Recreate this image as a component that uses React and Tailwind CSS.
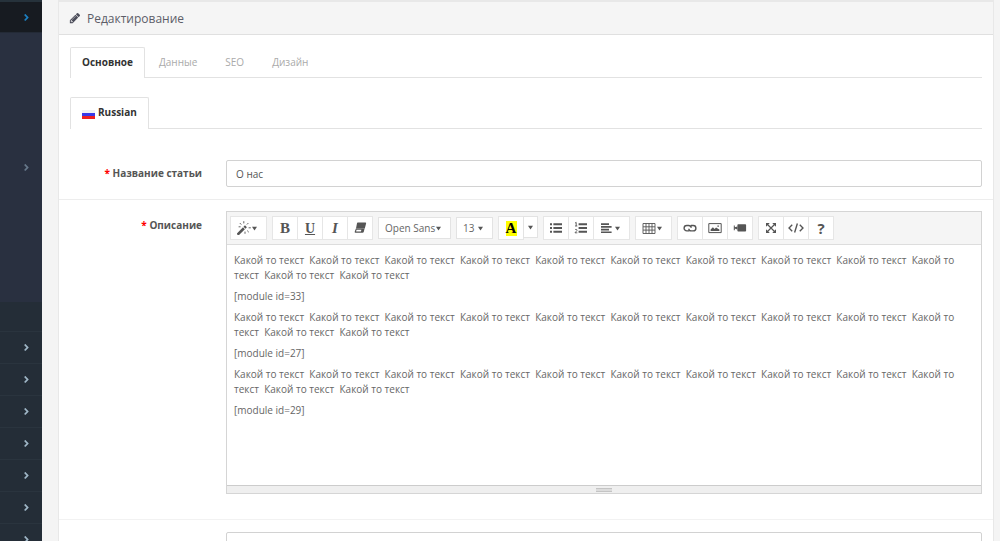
import React from "react";
import { FaAngleRight } from "react-icons/fa";

const PHRASE = "Какой то текст\u00a0 ";
const LONG_TEXT = PHRASE.repeat(12).trim();
const MODULES = [33, 27, 29];
const MENU = ["Каталог", "Дополнения", "Дизайн", "Продажи", "Покупатели", "Маркетинг", "Система"];

const Caret = () => (
  <svg viewBox="0 0 6 5" className="h-[5px] w-[5px] shrink-0 fill-[#555]" aria-hidden="true">
    <path d="M0 0.3h6L3 5z" />
  </svg>
);

function Icon({ children, size = "size-[14px]" }) {
  return (
    <svg viewBox="0 0 14 14" className={`${size} shrink-0 fill-[#555]`} aria-hidden="true">
      {children}
    </svg>
  );
}

const PencilIcon = () => (
  <svg viewBox="0 0 1792 1792" className="size-3 shrink-0 fill-[#4c4d5a]" aria-hidden="true">
    <path d="M491 1536l91-91-235-235-91 91v107h128v128h107zm523-928q0-22-22-22-10 0-17 7l-542 542q-7 7-7 17 0 22 22 22 10 0 17-7l542-542q7-7 7-17zm-54-192l416 416-832 832h-416v-416zm683 96q0 53-37 90l-166 166-416-416 166-165q36-38 90-38 53 0 91 38l235 234q37 39 37 91z" />
  </svg>
);

const MagicIcon = () => (
  <Icon>
    <path d="M0.4 11.900 6 6.300l1.900 1.900-5.600 5.500a1.300 1.300 0 0 1-1.900-1.800z" />
    <path d="M6.500 5.800 8 4.300l1.900 1.900L8.400 7.700z" />
    <path
      d="M2.800 2l1.500 1.600M6.800 0.200v2.200M11.400 2 9.900 3.500M11.600 6.800h2.200M10.200 9.600l1.600 1.600M8 10.600v2.200M1.600 5.800h2"
      fill="none"
      stroke="#666"
      strokeWidth="1"
    />
  </Icon>
);

const EraserIcon = () => (
  <Icon>
    <path d="M4.5 1.600h7.800a.8.8 0 0 1 .8 1L11.800 7.400H3L4 2.200z" />
    <path d="M2.900 7.600h8.700l-.8 3.200a1.400 1.400 0 0 1-1.300 1H2.500a.8.8 0 0 1-.8-1zM3.500 8.700l-.4 1.900h4.800l.5-1.900z" fillRule="evenodd" />
  </Icon>
);

const ListIcon = () => (
  <Icon>
    <path d="M1 2.2h2v2H1zM1 6h2v2H1zM1 9.8h2v2H1zM4.4 2.2H13v2H4.4zM4.4 6H13v2H4.4zM4.4 9.8H13v2H4.4z" />
  </Icon>
);

const OrderedIcon = () => (
  <Icon>
    <path d="M4.6 2.2H13v2H4.6zM4.6 6H13v2H4.6zM4.6 9.8H13v2H4.6z" />
    <path
      d="M1 2.1 2.2 1.4V5M1 5h2.3M1 8.9c.5-.8 2-.7 2 .3 0 .8-1.4 1.5-2 2.6h2.3"
      fill="none"
      stroke="#555"
      strokeWidth="0.9"
    />
  </Icon>
);

const AlignIcon = () => (
  <Icon>
    <path d="M1 2.300h8v1.700H1zM1 5h10.600v1.700H1zM1 7.700h8v1.700H1zM1 10.400h10.600v1.700H1z" />
  </Icon>
);

const TableIcon = () => (
  <Icon>
    <path
      d="M1 2.5h12v10H1zM1 5.8h12M1 9.1h12M4 2.5v10M7 2.5v10M10 2.5v10"
      fill="none"
      stroke="#555"
      strokeWidth="0.9"
    />
  </Icon>
);

const LinkIcon = () => (
  <Icon>
    <path
      d="M6.2 9.9H3.8a2.7 2.7 0 0 1 0-5.4h1.8c1.5 0 2.5 1 2.6 2.2M7.8 4.5h2.4a2.7 2.7 0 0 1 0 5.4H8.4c-1.5 0-2.5-1-2.6-2.2"
      fill="none"
      stroke="#555"
      strokeWidth="1.4"
    />
  </Icon>
);

const PictureIcon = () => (
  <Icon>
    <path d="M.8 2.6h12.4v9H.8z" fill="none" stroke="#555" strokeWidth="1" />
    <path d="M2.6 10V8.6l2.3-2.4L6.5 8l1.6-1.5 1.1.8 2.2 1.3V10zM9.4 4.4h1.5v1.4H9.4z" />
  </Icon>
);

const VideoIcon = () => (
  <Icon>
    <path d="M5.200 3.200h7.100c.5 0 .8.3.8.8v5.800c0 .5-.3.8-.8.8H5.200c-.5 0-.8-.3-.8-.8V4c0-.5.3-.8.8-.8zM.8 4.500h1v1.700l2.400-.8v3l-2.400-.8v1.700h-1z" />
  </Icon>
);

const FullscreenIcon = () => (
  <Icon>
    <path d="M2 2h3.800L2 5.800zM12 2v3.800L8.200 2zM2 12V8.200L5.800 12zM12 12H8.200L12 8.200z" />
    <path d="m3 3 8 8M11 3l-8 8" stroke="#555" strokeWidth="1.2" />
  </Icon>
);

const CodeIcon = () => (
  <Icon size="size-4">
    <path
      d="M3.700 4.200.9 7l2.800 2.800M10.300 4.200 13.100 7l-2.800 2.800M8.200 3 5.800 11"
      fill="none"
      stroke="#555"
      strokeWidth="1.200"
    />
  </Icon>
);

const Group = ({ children }) => <div className="flex -space-x-px">{children}</div>;

function Tool({ label, children, wide }) {
  return (
    <button
      type="button"
      aria-label={label}
      className={`flex h-6 items-center justify-center gap-px border border-[#e6e6e6] bg-white text-[#555] ${
        wide ? "w-[37px] pr-1" : "w-[26px]"
      }`}
    >
      {children}
    </button>
  );
}

function ToolSelect({ label, value, width }) {
  return (
    <div className={`relative ${width}`}>
      <select
        aria-label={label}
        defaultValue={value}
        className="block h-[22px] w-full appearance-none border border-[#e3e3e3] bg-white pl-[6px] text-[10px] text-[#666] outline-none"
      >
        <option>{value}</option>
      </select>
      <span className="pointer-events-none absolute inset-y-0 right-[10px] flex items-center">
        <Caret />
      </span>
    </div>
  );
}

function Toolbar() {
  return (
    <div
      role="toolbar"
      aria-label="Форматирование"
      className="flex flex-wrap items-center gap-[5px] border-b border-[#ddd] bg-[#f5f5f5] px-[3px] py-1"
    >
      <Tool label="Стиль" wide>
        <MagicIcon />
        <Caret />
      </Tool>
      <Group>
        <Tool label="Полужирный">
          <span className="font-['Liberation_Serif',serif] text-[15px] font-bold">B</span>
        </Tool>
        <Tool label="Подчёркнутый">
          <span className="font-['Liberation_Serif',serif] text-[14px] font-bold underline">U</span>
        </Tool>
        <Tool label="Курсив">
          <span className="font-['Liberation_Serif',serif] text-[15px] font-bold italic">I</span>
        </Tool>
        <Tool label="Убрать стили">
          <EraserIcon />
        </Tool>
      </Group>
      <ToolSelect label="Шрифт" value="Open Sans" width="w-[73px]" />
      <ToolSelect label="Размер шрифта" value="13" width="w-[37px]" />
      <div className="flex items-start -space-x-px">
        <Tool label="Цвет">
          <span className="flex h-[15px] w-[11px] items-center justify-center bg-[#ffff00] font-['Liberation_Serif',serif] text-[15px] font-bold text-black">
            A
          </span>
        </Tool>
        <button
          type="button"
          aria-label="Ещё цвета"
          className="flex h-[22px] w-[15px] items-center justify-center border border-[#e3e3e3] bg-white"
        >
          <Caret />
        </button>
      </div>
      <Group>
        <Tool label="Маркированный список">
          <ListIcon />
        </Tool>
        <Tool label="Нумерованный список">
          <OrderedIcon />
        </Tool>
        <Tool label="Выравнивание" wide>
          <AlignIcon />
          <Caret />
        </Tool>
      </Group>
      <Tool label="Таблица" wide>
        <TableIcon />
        <Caret />
      </Tool>
      <Group>
        <Tool label="Ссылка">
          <LinkIcon />
        </Tool>
        <Tool label="Картинка">
          <PictureIcon />
        </Tool>
        <Tool label="Видео">
          <VideoIcon />
        </Tool>
      </Group>
      <Group>
        <Tool label="На весь экран">
          <FullscreenIcon />
        </Tool>
        <Tool label="Исходный код">
          <CodeIcon />
        </Tool>
        <Tool label="Помощь">
          <span className="text-[15px] font-bold">?</span>
        </Tool>
      </Group>
    </div>
  );
}

function Sidebar() {
  return (
    <nav aria-label="Меню" className="flex w-[42px] shrink-0 flex-col bg-[#242d37] text-[11px] text-[#9fb6c6]">
      <a
        href="#current"
        aria-label="Текущий раздел"
        className="flex h-8 shrink-0 items-center justify-end border-t-2 border-[#26323b] bg-[#171b21] pr-[10px] text-[#1c7fc0]"
      >
        <FaAngleRight />
      </a>
      <div className="h-[270px] shrink-0 border-t border-[#232a36] bg-[#293040] pt-[126px]">
        <a href="#sub" aria-label="Подраздел" className="flex h-4 items-center justify-end pr-[10px] text-[#66788a]">
          <FaAngleRight />
        </a>
      </div>
      <div className="h-[30px] shrink-0 border-b border-[#2a343e]" />
      {MENU.map((name) => (
        <a
          key={name}
          href="#menu"
          aria-label={name}
          className="flex h-8 shrink-0 items-center justify-end border-b border-[#2a343e] pr-[10px]"
        >
          <FaAngleRight />
        </a>
      ))}
    </nav>
  );
}

export default function App() {
  return (
    <div className="flex h-screen overflow-hidden bg-[#f4f4f4] font-['Open_Sans',sans-serif] text-[10px] leading-[15px] text-[#666]">
      <Sidebar />
      <main className="min-w-0 flex-1 pr-[6px] pl-4">
        <section className="border-x border-t-2 border-[#e8e8e8] bg-white">
          <header className="flex h-[33px] items-center gap-[6px] border-b border-[#e0e0e0] bg-[#f5f5f5] px-[10px]">
            <PencilIcon />
            <h1 className="text-[12px] text-[#5c5d68]">Редактирование</h1>
          </header>
          <div className="px-[11px] pt-3">
            <div role="tablist" aria-label="Разделы" className="flex border-b border-[#e2e2e2]">
              <button
                type="button"
                role="tab"
                aria-selected="true"
                className="-mb-px h-[31px] rounded-t-[2px] border border-b-0 border-[#e2e2e2] bg-white px-[11px] pb-[2px] font-bold text-[#333]"
              >
                Основное
              </button>
              {["Данные", "SEO", "Дизайн"].map((tab) => (
                <button key={tab} type="button" role="tab" aria-selected="false" className="px-[14px] text-[#aaa]">
                  {tab}
                </button>
              ))}
            </div>
            <div role="tablist" aria-label="Языки" className="mt-[19px] flex border-b border-[#e2e2e2]">
              <button
                type="button"
                role="tab"
                aria-selected="true"
                className="-mb-px flex h-8 items-center gap-[3px] rounded-t-[2px] border border-b-0 border-[#e2e2e2] bg-white px-[11px] pb-[2px] font-bold text-[#333]"
              >
                <svg viewBox="0 0 13 9" className="mt-1 h-[9px] w-[13px]" aria-hidden="true">
                  <path d="M0 0h13v3H0z" fill="#f1f1f4" />
                  <path d="M0 3h13v3H0z" fill="#3838e8" />
                  <path d="M0 6h13v3H0z" fill="#ee2020" />
                </svg>
                Russian
              </button>
            </div>
          </div>

          <div className="mt-[31px] flex border-b border-[#ededed] px-[11px] pb-3">
            <label htmlFor="title" className="w-39 shrink-0 pt-[6px] pr-6 text-right font-bold text-[#555]">
              <span className="text-[#ff0000]">*</span> Название статьи
            </label>
            <input
              id="title"
              defaultValue="О нас"
              className="h-[27px] min-w-0 flex-1 rounded-[2px] border border-[#d2d2d2] bg-white px-[9px] text-[#555] outline-none"
            />
          </div>

          <div className="flex border-b border-[#f2f2f2] px-[11px] pt-[11px] pb-[25px]">
            <div id="description-label" className="w-39 shrink-0 pt-[7px] pr-6 text-right font-bold text-[#555]">
              <span className="text-[#ff0000]">*</span> Описание
            </div>
            <div className="min-w-0 flex-1 border border-[#d5d5d5]">
              <Toolbar />
              <div
                role="textbox"
                aria-multiline="true"
                aria-labelledby="description-label"
                contentEditable
                suppressContentEditableWarning
                className="h-60 overflow-hidden px-[7px] pt-2 outline-none"
              >
                {MODULES.map((id) => (
                  <React.Fragment key={id}>
                    <p className="mb-[6px]">{LONG_TEXT}</p>
                    <p className="mb-[6px]">[module id={id}]</p>
                  </React.Fragment>
                ))}
              </div>
              <div className="flex h-2 items-center justify-center border-t border-[#ccc] bg-[#efefef]">
                <span className="h-1 w-4 border-y border-[#c4c4c4] bg-[#dcdcdc]" />
              </div>
            </div>
          </div>

          <div className="flex px-[11px] pt-3 pb-3">
            <div className="w-39 shrink-0" />
            <input
              aria-label="Заголовок"
              className="h-[27px] min-w-0 flex-1 rounded-[2px] border border-[#d2d2d2] bg-white px-[9px] outline-none"
            />
          </div>
        </section>
      </main>
    </div>
  );
}
